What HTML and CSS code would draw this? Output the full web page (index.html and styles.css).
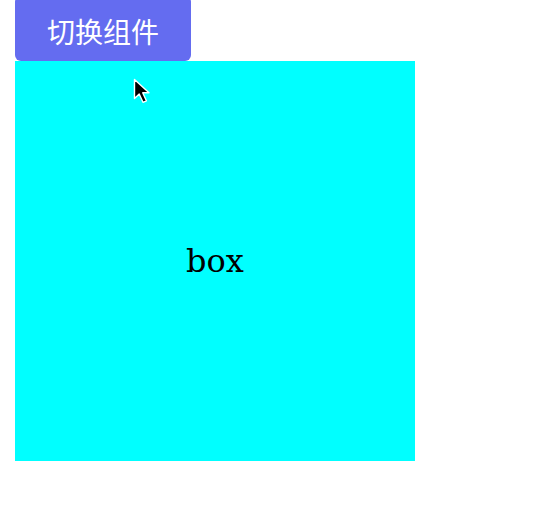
FILE: index.html
```html
<!DOCTYPE html>
<html>
<head>
<meta charset="utf-8">
<link rel="stylesheet" href="styles.css">
</head>
<body>
<div class="app">
  <button class="toggle">切换组件</button>
  <div class="box">box</div>
</div>
<svg class="cursor" width="20" height="30" viewBox="0 0 20 30">
  <path d="M1.5 1.5 L1.5 20.5 L6.2 16 L10 24.3 L13.4 22.8 L9.7 14.8 L16 14.8 Z" fill="#000" stroke="#fff" stroke-width="1.4" stroke-linejoin="round"/>
</svg>
</body>
</html>
```
FILE: styles.css
```css
html, body {
  margin: 0;
  padding: 0;
  background: #fff;
}
.app {
  padding-left: 15px;
  display: flex;
  flex-direction: column;
  align-items: flex-start;
}
.toggle {
  margin-top: -4px;
  width: 176px;
  height: 65px;
  padding: 4px 0 0 0;
  border: none;
  border-radius: 6px;
  background: #646cf0;
  color: #fff;
  font-family: "Noto Sans CJK SC", "Noto Sans", sans-serif;
  font-size: 28px;
  line-height: 1;
}
.box {
  width: 400px;
  height: 400px;
  background: #00ffff;
  display: flex;
  align-items: center;
  justify-content: center;
  font-family: "DejaVu Serif", serif;
  font-size: 32px;
  color: #000;
}
.cursor {
  position: absolute;
  left: 133px;
  top: 78px;
}
```
